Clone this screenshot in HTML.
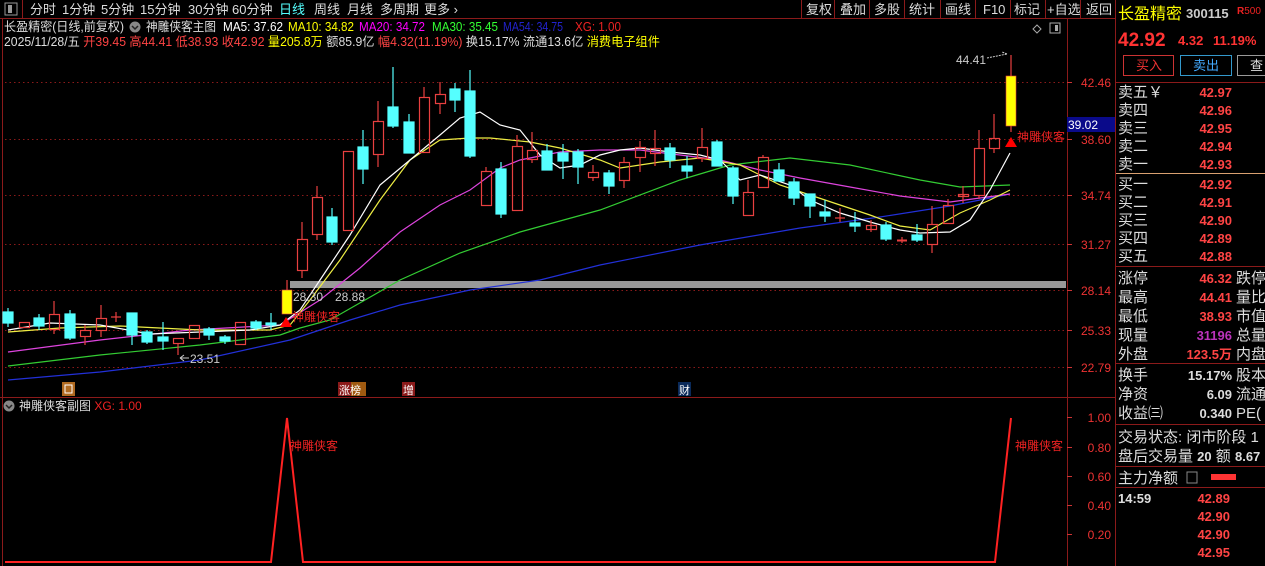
<!DOCTYPE html>
<html><head><meta charset="utf-8"><style>
html,body{margin:0;padding:0;background:#000;width:1265px;height:566px;overflow:hidden}
svg{display:block}
text{font-family:"Liberation Sans","Noto Sans CJK SC",sans-serif}
</style></head><body>
<svg width="1265" height="566" viewBox="0 0 1265 566" xmlns="http://www.w3.org/2000/svg">
<rect width="1265" height="566" fill="#000"/>
<line x1="0" y1="18.5" x2="1115" y2="18.5" stroke="#8b1a1a"/>
<rect x="5" y="3" width="12" height="12" fill="none" stroke="#999" stroke-width="1"/>
<rect x="8" y="5" width="4" height="8" fill="#999"/>
<line x1="22.5" y1="0" x2="22.5" y2="18" stroke="#8b1a1a"/>
<g font-size="13" fill="#ddd">
<text x="30" y="14">分时</text><text x="62" y="14">1分钟</text><text x="101" y="14">5分钟</text><text x="140" y="14">15分钟</text><text x="188" y="14">30分钟</text><text x="232" y="14">60分钟</text><text x="279" y="14" fill="#5ff">日线</text><text x="314" y="14">周线</text><text x="347" y="14">月线</text><text x="380" y="14">多周期</text><text x="424" y="14">更多 ›</text>
<text x="806" y="14">复权</text><text x="840" y="14">叠加</text><text x="874" y="14">多股</text><text x="909" y="14">统计</text><text x="945" y="14">画线</text><text x="983" y="14">F10</text><text x="1014" y="14">标记</text><text x="1047" y="14">+自选</text><text x="1086" y="14">返回</text>
</g>
<g stroke="#8b1a1a"><line x1="801.5" y1="0" x2="801.5" y2="18"/><line x1="834.5" y1="0" x2="834.5" y2="18"/><line x1="869.5" y1="0" x2="869.5" y2="18"/><line x1="904.5" y1="0" x2="904.5" y2="18"/><line x1="940.5" y1="0" x2="940.5" y2="18"/><line x1="975.5" y1="0" x2="975.5" y2="18"/><line x1="1010.5" y1="0" x2="1010.5" y2="18"/><line x1="1045.5" y1="0" x2="1045.5" y2="18"/><line x1="1080.5" y1="0" x2="1080.5" y2="18"/></g>
<g stroke="#8b1a1a">
<line x1="1067.5" y1="18" x2="1067.5" y2="566"/>
<line x1="1115.5" y1="0" x2="1115.5" y2="566"/>
<line x1="0" y1="397.5" x2="1115" y2="397.5"/>
<line x1="2.5" y1="18" x2="2.5" y2="566"/>
</g>
<path d="M1037 25 l4 4 -4 4 -4 -4z" fill="none" stroke="#aaa"/>
<rect x="1050" y="23" width="10" height="10" fill="none" stroke="#aaa"/><rect x="1055" y="25" width="3" height="6" fill="#aaa"/>
<g font-size="12.5">
<text x="4" y="31" fill="#ddd" textLength="120" lengthAdjust="spacingAndGlyphs">长盈精密(日线,前复权)</text>
<circle cx="135" cy="27" r="5.5" fill="#888"/><path d="M132 26 l3 3 3-3" stroke="#222" fill="none" stroke-width="1.5"/>
<text x="146" y="31" fill="#ddd" textLength="70" lengthAdjust="spacingAndGlyphs">神雕侠客主图</text>
<text x="223" y="31" fill="#fff" textLength="60" lengthAdjust="spacingAndGlyphs">MA5: 37.62</text>
<text x="288" y="31" fill="#ff0" textLength="66" lengthAdjust="spacingAndGlyphs">MA10: 34.82</text>
<text x="359" y="31" fill="#f0f" textLength="66" lengthAdjust="spacingAndGlyphs">MA20: 34.72</text>
<text x="432" y="31" fill="#3f3" textLength="66" lengthAdjust="spacingAndGlyphs">MA30: 35.45</text>
<text x="503" y="31" fill="#22c" textLength="60" lengthAdjust="spacingAndGlyphs">MA54: 34.75</text>
<text x="575" y="31" fill="#e22" textLength="46" lengthAdjust="spacingAndGlyphs">XG: 1.00</text>
<text x="4" y="46" fill="#ddd" textLength="656" lengthAdjust="spacingAndGlyphs">2025/11/28/五 <tspan fill="#f44">开39.45 高44.41 低38.93 收42.92</tspan> <tspan fill="#ff0">量205.8万</tspan> 额85.9亿 <tspan fill="#f44">幅4.32(11.19%)</tspan> 换15.17% 流通13.6亿 <tspan fill="#ff0">消费电子组件</tspan></text>
</g>
<g stroke="#8b1a1a" stroke-dasharray="1.5 3">
<line x1="5" y1="82.5" x2="1067" y2="82.5"/><line x1="5" y1="139.5" x2="1067" y2="139.5"/><line x1="5" y1="195.5" x2="1067" y2="195.5"/><line x1="5" y1="244.5" x2="1067" y2="244.5"/><line x1="5" y1="290.5" x2="1067" y2="290.5"/><line x1="5" y1="330.5" x2="1067" y2="330.5"/><line x1="5" y1="367.5" x2="1067" y2="367.5"/>
</g>
<g font-size="12" fill="#e33" text-anchor="end">
<text x="1111" y="87">42.46</text><text x="1111" y="144">38.60</text><text x="1111" y="200">34.74</text><text x="1111" y="249">31.27</text><text x="1111" y="295">28.14</text><text x="1111" y="335">25.33</text><text x="1111" y="372">22.79</text>
<text x="1111" y="422">1.00</text><text x="1111" y="452">0.80</text><text x="1111" y="481">0.60</text><text x="1111" y="510">0.40</text><text x="1111" y="539">0.20</text>
</g>
<g stroke="#c33"><line x1="1067" y1="82.5" x2="1072" y2="82.5"/><line x1="1067" y1="139.5" x2="1072" y2="139.5"/><line x1="1067" y1="195.5" x2="1072" y2="195.5"/><line x1="1067" y1="244.5" x2="1072" y2="244.5"/><line x1="1067" y1="290.5" x2="1072" y2="290.5"/><line x1="1067" y1="330.5" x2="1072" y2="330.5"/><line x1="1067" y1="367.5" x2="1072" y2="367.5"/>
<line x1="1067" y1="417.5" x2="1072" y2="417.5"/><line x1="1067" y1="447.5" x2="1072" y2="447.5"/><line x1="1067" y1="476.5" x2="1072" y2="476.5"/><line x1="1067" y1="505.5" x2="1072" y2="505.5"/><line x1="1067" y1="534.5" x2="1072" y2="534.5"/></g>
<rect x="1067" y="117" width="48" height="15" fill="#0a0a8a"/>
<text x="1068" y="129" font-size="12" fill="#fff">39.02</text>
<rect x="290" y="281" width="776" height="7" fill="#999"/>
<g fill="none" stroke-width="1.2">
<polyline stroke="#2230d8" points="8,380 100,372 200,360 290,340 350,320 400,305 470,290 540,280 600,265 700,245 800,228 880,217 950,206 1010,194"/>
<polyline stroke="#3c3" points="8,366 100,355 200,345 280,335 300,328 330,320 400,280 460,253 520,232 600,210 680,180 730,165 790,158 850,165 920,180 960,187 1010,185"/>
<polyline stroke="#d4d" points="8,352 100,340 190,330 280,325 320,300 360,268 400,232 440,205 470,190 500,168 520,160 560,152 600,150 640,150 680,155 720,160 760,170 800,178 850,187 900,196 950,202 1010,194"/>
<polyline stroke="#ee4" points="8,332 60,328 120,326 200,330 270,330 290,325 310,300 340,260 380,200 410,160 440,140 470,138 490,138 530,142 560,148 600,160 620,168 660,162 700,158 740,165 780,185 810,195 840,205 870,215 900,226 930,230 960,213 990,200 1010,190"/>
<polyline stroke="#fff" points="8,330 50,323 100,325 150,334 200,332 250,330 280,325 300,310 320,280 350,235 380,185 410,160 440,135 460,118 480,112 500,125 520,130 540,155 560,168 580,165 600,155 620,150 640,148 670,152 700,155 720,160 740,180 760,175 790,185 810,200 840,213 870,222 900,230 920,233 950,232 970,220 990,190 1010,153"/>
</g>
<g stroke-width="1.2">
<g stroke="#5ff" fill="#5ff">
<line x1="8" y1="308" x2="8" y2="327"/><rect x="3" y="312" width="10" height="11"/>
<line x1="39" y1="314" x2="39" y2="330"/><rect x="34" y="318" width="10" height="8"/>
<line x1="70" y1="310" x2="70" y2="340"/><rect x="65" y="314" width="10" height="24"/>
<line x1="132" y1="313" x2="132" y2="345"/><rect x="127" y="313" width="10" height="22"/>
<line x1="147" y1="330" x2="147" y2="344"/><rect x="142" y="332" width="10" height="10"/>
<line x1="163" y1="322" x2="163" y2="350"/><rect x="158" y="337" width="10" height="4"/>
<line x1="209" y1="327" x2="209" y2="340"/><rect x="204" y="329" width="10" height="6"/>
<line x1="225" y1="335" x2="225" y2="344"/><rect x="220" y="337" width="10" height="4"/>
<line x1="256" y1="320" x2="256" y2="330"/><rect x="251" y="322" width="10" height="6"/>
<line x1="271" y1="313" x2="271" y2="330"/><rect x="266" y="323" width="10" height="2"/>
<line x1="332" y1="208" x2="332" y2="245"/><rect x="327" y="217" width="10" height="25"/>
<line x1="363" y1="130" x2="363" y2="184"/><rect x="358" y="147" width="10" height="22"/>
<line x1="393" y1="67" x2="393" y2="128"/><rect x="388" y="107" width="10" height="19"/>
<line x1="409" y1="114" x2="409" y2="153"/><rect x="404" y="122" width="10" height="31"/>
<line x1="455" y1="83" x2="455" y2="112"/><rect x="450" y="89" width="10" height="11"/>
<line x1="470" y1="70" x2="470" y2="158"/><rect x="465" y="91" width="10" height="65"/>
<line x1="501" y1="162" x2="501" y2="218"/><rect x="496" y="169" width="10" height="45"/>
<line x1="547" y1="144" x2="547" y2="170"/><rect x="542" y="151" width="10" height="19"/>
<line x1="563" y1="144" x2="563" y2="179"/><rect x="558" y="153" width="10" height="8"/>
<line x1="578" y1="149" x2="578" y2="184"/><rect x="573" y="152" width="10" height="15"/>
<line x1="609" y1="170" x2="609" y2="194"/><rect x="604" y="173" width="10" height="13"/>
<line x1="670" y1="143" x2="670" y2="168"/><rect x="665" y="148" width="10" height="12"/>
<line x1="687" y1="156" x2="687" y2="178"/><rect x="682" y="166" width="10" height="5"/>
<line x1="717" y1="140" x2="717" y2="166"/><rect x="712" y="142" width="10" height="24"/>
<line x1="733" y1="166" x2="733" y2="204"/><rect x="728" y="168" width="10" height="28"/>
<line x1="779" y1="163" x2="779" y2="181"/><rect x="774" y="170" width="10" height="11"/>
<line x1="794" y1="178" x2="794" y2="205"/><rect x="789" y="182" width="10" height="16"/>
<line x1="810" y1="194" x2="810" y2="218"/><rect x="805" y="194" width="10" height="12"/>
<line x1="825" y1="200" x2="825" y2="222"/><rect x="820" y="212" width="10" height="4"/>
<line x1="855" y1="212" x2="855" y2="232"/><rect x="850" y="223" width="10" height="3"/>
<line x1="886" y1="222" x2="886" y2="241"/><rect x="881" y="225" width="10" height="14"/>
<line x1="917" y1="224" x2="917" y2="242"/><rect x="912" y="235" width="10" height="5"/>
</g>
<g stroke="#e84040" fill="none">
<rect x="19.5" y="322.5" width="10" height="5"/>
<line x1="54" y1="301" x2="54" y2="314"/><line x1="54" y1="329" x2="54" y2="334"/><rect x="49.5" y="314.5" width="10" height="15"/>
<line x1="85" y1="325" x2="85" y2="330"/><line x1="85" y1="336" x2="85" y2="345"/><rect x="80.5" y="330.5" width="10" height="6"/>
<line x1="101" y1="305" x2="101" y2="318"/><line x1="101" y1="330" x2="101" y2="337"/><rect x="96.5" y="318.5" width="10" height="12"/>
<line x1="116" y1="312" x2="116" y2="322"/><line x1="111" y1="317" x2="121" y2="317"/>
<line x1="178" y1="343" x2="178" y2="355"/><rect x="173.5" y="338.5" width="10" height="5"/>
<rect x="189.5" y="325.5" width="10" height="13"/>
<rect x="235.5" y="322.5" width="10" height="22"/>
<line x1="302" y1="222" x2="302" y2="239"/><line x1="302" y1="270" x2="302" y2="278"/><rect x="297.5" y="239.5" width="10" height="31"/>
<line x1="317" y1="186" x2="317" y2="197"/><line x1="317" y1="234" x2="317" y2="240"/><rect x="312.5" y="197.5" width="10" height="37"/>
<rect x="343.5" y="151.5" width="10" height="79"/>
<line x1="378" y1="101" x2="378" y2="121"/><line x1="378" y1="154" x2="378" y2="167"/><rect x="373.5" y="121.5" width="10" height="33"/>
<line x1="424" y1="87" x2="424" y2="97"/><rect x="419.5" y="97.5" width="10" height="55"/>
<line x1="440" y1="82" x2="440" y2="94"/><line x1="440" y1="103" x2="440" y2="114"/><rect x="435.5" y="94.5" width="10" height="9"/>
<line x1="486" y1="167" x2="486" y2="171"/><rect x="481.5" y="171.5" width="10" height="34"/>
<line x1="517" y1="135" x2="517" y2="146"/><rect x="512.5" y="146.5" width="10" height="64"/>
<line x1="532" y1="132" x2="532" y2="150"/><line x1="532" y1="159" x2="532" y2="163"/><rect x="527.5" y="150.5" width="10" height="9"/>
<line x1="593" y1="165" x2="593" y2="172"/><line x1="593" y1="177" x2="593" y2="181"/><rect x="588.5" y="172.5" width="10" height="5"/>
<line x1="624" y1="157" x2="624" y2="162"/><line x1="624" y1="180" x2="624" y2="188"/><rect x="619.5" y="162.5" width="10" height="18"/>
<line x1="640" y1="141" x2="640" y2="147"/><line x1="640" y1="157" x2="640" y2="172"/><rect x="635.5" y="147.5" width="10" height="10"/>
<line x1="655" y1="130" x2="655" y2="148"/><line x1="655" y1="153" x2="655" y2="166"/><rect x="650.5" y="148.5" width="10" height="5"/>
<line x1="702" y1="128" x2="702" y2="147"/><line x1="702" y1="158" x2="702" y2="162"/><rect x="697.5" y="147.5" width="10" height="11"/>
<line x1="748" y1="180" x2="748" y2="192"/><rect x="743.5" y="192.5" width="10" height="23"/>
<line x1="763" y1="155" x2="763" y2="157"/><rect x="758.5" y="157.5" width="10" height="30"/>
<line x1="840" y1="208" x2="840" y2="222"/><line x1="835" y1="218" x2="845" y2="218"/>
<line x1="871" y1="220" x2="871" y2="232"/><rect x="866.5" y="225.5" width="10" height="4"/>
<line x1="902" y1="237" x2="902" y2="243"/><line x1="897" y1="240.5" x2="907" y2="240.5" stroke-width="2"/>
<line x1="932" y1="206" x2="932" y2="224"/><line x1="932" y1="244" x2="932" y2="253"/><rect x="927.5" y="224.5" width="10" height="20"/>
<line x1="948" y1="199" x2="948" y2="205"/><rect x="943.5" y="205.5" width="10" height="18"/>
<line x1="963" y1="186" x2="963" y2="203"/><rect x="958.5" y="194.5" width="10" height="2"/>
<line x1="979" y1="130" x2="979" y2="148"/><line x1="979" y1="195" x2="979" y2="199"/><rect x="974.5" y="148.5" width="10" height="47"/>
<line x1="994" y1="114" x2="994" y2="138"/><line x1="994" y1="148" x2="994" y2="153"/><rect x="989.5" y="138.5" width="10" height="10"/>
<line x1="1011" y1="55" x2="1011" y2="76"/><line x1="1011" y1="126" x2="1011" y2="132"/>
<line x1="287" y1="280" x2="287" y2="290"/>
</g>
<rect x="282" y="290" width="10" height="24" fill="#ff0" stroke="#e84040" stroke-width="0.6"/>
<rect x="1006" y="76" width="10" height="50" fill="#ff0" stroke="#e84040" stroke-width="0.6"/>
</g>
<path d="M280 327 l6 -10 6 10z" fill="#f00"/>
<path d="M1005 147 l6 -10 6 10z" fill="#f00"/>
<g font-size="12" fill="#e22"><text x="292" y="321">神雕侠客</text><text x="1017" y="141">神雕侠客</text></g>
<g font-size="12" fill="#ccc">
<text x="293" y="301">28.30</text><text x="335" y="301">28.88</text>
<text x="190" y="363">23.51</text><path d="M180 358 h9 M180 358 l4 -3 M180 358 l4 3" stroke="#ccc" fill="none"/>
<text x="956" y="64">44.41</text><path d="M987 58 l20 -4 M1007 54 l-5 -2" stroke="#ccc" fill="none" stroke-dasharray="2 1"/>
</g>
<g font-size="11">
<rect x="62" y="382" width="13" height="14" fill="#b06a20"/><rect x="65" y="385" width="7" height="8" fill="none" stroke="#fff"/>
<rect x="338" y="382" width="13" height="14" fill="#8b1a1a"/><rect x="351" y="382" width="15" height="14" fill="#a05a10"/><text x="339" y="394" fill="#fff">涨榜</text>
<rect x="402" y="382" width="13" height="14" fill="#8b1a1a"/><text x="403" y="394" fill="#fff">增</text>
<rect x="678" y="382" width="13" height="14" fill="#0a2a5a"/><text x="679" y="394" fill="#fff">财</text>
</g>
<circle cx="9" cy="406" r="5.5" fill="#888"/><path d="M6 405 l3 3 3-3" stroke="#222" fill="none" stroke-width="1.5"/>
<text x="19" y="410" font-size="12" fill="#ddd">神雕侠客副图 <tspan fill="#e22">XG: 1.00</tspan></text>
<polyline fill="none" stroke="#f22" stroke-width="2" points="5,562 271,562 287,418 303,562 995,562 1011,418"/>
<g font-size="12" fill="#e22"><text x="290" y="450">神雕侠客</text><text x="1015" y="450">神雕侠客</text></g>
<text x="1118" y="19" font-size="16" fill="#ff0">长盈精密</text>
<text x="1186" y="18" font-size="13" font-weight="bold" fill="#ccc">300115</text>
<text x="1237" y="14" font-size="10" font-weight="bold" fill="#e22">R<tspan font-weight="normal">500</tspan></text>
<text x="1118" y="46" font-size="19" font-weight="bold" fill="#f33">42.92</text>
<text x="1178" y="45" font-size="13" font-weight="bold" fill="#f33">4.32</text>
<text x="1213" y="45" font-size="13" font-weight="bold" fill="#f33">11.19%</text>
<rect x="1123.5" y="55.5" width="50" height="20" fill="none" stroke="#c33"/><text x="1136" y="70" font-size="13" fill="#e33">买入</text>
<rect x="1180.5" y="55.5" width="51" height="20" fill="none" stroke="#39c"/><text x="1193" y="70" font-size="13" fill="#4af">卖出</text>
<rect x="1237.5" y="55.5" width="40" height="20" fill="none" stroke="#999"/><text x="1250" y="70" font-size="13" fill="#ddd">查</text>
<g stroke="#8b1a1a"><line x1="1116" y1="82.5" x2="1265" y2="82.5"/><line x1="1116" y1="266.5" x2="1265" y2="266.5"/><line x1="1116" y1="363.5" x2="1265" y2="363.5"/><line x1="1116" y1="424.5" x2="1265" y2="424.5"/><line x1="1116" y1="466.5" x2="1265" y2="466.5"/><line x1="1116" y1="487.5" x2="1265" y2="487.5"/></g>
<line x1="1116" y1="173.5" x2="1265" y2="173.5" stroke="#d9a070"/>
<g font-size="15" fill="#ddd">
<text x="1118" y="97">卖五￥</text><text x="1118" y="115">卖四</text><text x="1118" y="133">卖三</text><text x="1118" y="151">卖二</text><text x="1118" y="169">卖一</text>
<text x="1118" y="189">买一</text><text x="1118" y="207">买二</text><text x="1118" y="225">买三</text><text x="1118" y="243">买四</text><text x="1118" y="261">买五</text>
<text x="1118" y="283">涨停</text><text x="1118" y="302">最高</text><text x="1118" y="321">最低</text><text x="1118" y="340">现量</text><text x="1118" y="359">外盘</text>
<text x="1236" y="283">跌停</text><text x="1236" y="302">量比</text><text x="1236" y="321">市值</text><text x="1236" y="340">总量</text><text x="1236" y="359">内盘</text>
<text x="1118" y="380">换手</text><text x="1118" y="399">净资</text><text x="1118" y="418">收益㈢</text>
<text x="1236" y="380">股本</text><text x="1236" y="399">流通</text><text x="1236" y="418">PE(</text>
<text x="1118" y="442">交易状态: 闭市阶段 1</text><text x="1118" y="461">盘后交易量 <tspan font-weight="bold" font-size="13">20</tspan> 额 <tspan font-weight="bold" font-size="13">8.67</tspan></text>
<text x="1118" y="483">主力净额</text>
</g>
<rect x="1187" y="472" width="10" height="11" fill="none" stroke="#888"/>
<rect x="1211" y="474" width="25" height="6" fill="#f33"/>
<g font-size="13" font-weight="bold" fill="#f44" text-anchor="end">
<text x="1232" y="97">42.97</text><text x="1232" y="115">42.96</text><text x="1232" y="133">42.95</text><text x="1232" y="151">42.94</text><text x="1232" y="169">42.93</text>
<text x="1232" y="189">42.92</text><text x="1232" y="207">42.91</text><text x="1232" y="225">42.90</text><text x="1232" y="243">42.89</text><text x="1232" y="261">42.88</text>
<text x="1232" y="283">46.32</text><text x="1232" y="302">44.41</text><text x="1232" y="321">38.93</text><text x="1232" y="340" fill="#b3b">31196</text><text x="1232" y="359">123.5万</text>
<text x="1232" y="380" fill="#ddd">15.17%</text><text x="1232" y="399" fill="#ddd">6.09</text><text x="1232" y="418" fill="#ddd">0.340</text>
<text x="1230" y="503">42.89</text><text x="1230" y="521">42.90</text><text x="1230" y="539">42.90</text><text x="1230" y="557">42.95</text>
</g>
<text x="1118" y="503" font-size="13" font-weight="bold" fill="#ddd">14:59</text>
</svg>
</body></html>
